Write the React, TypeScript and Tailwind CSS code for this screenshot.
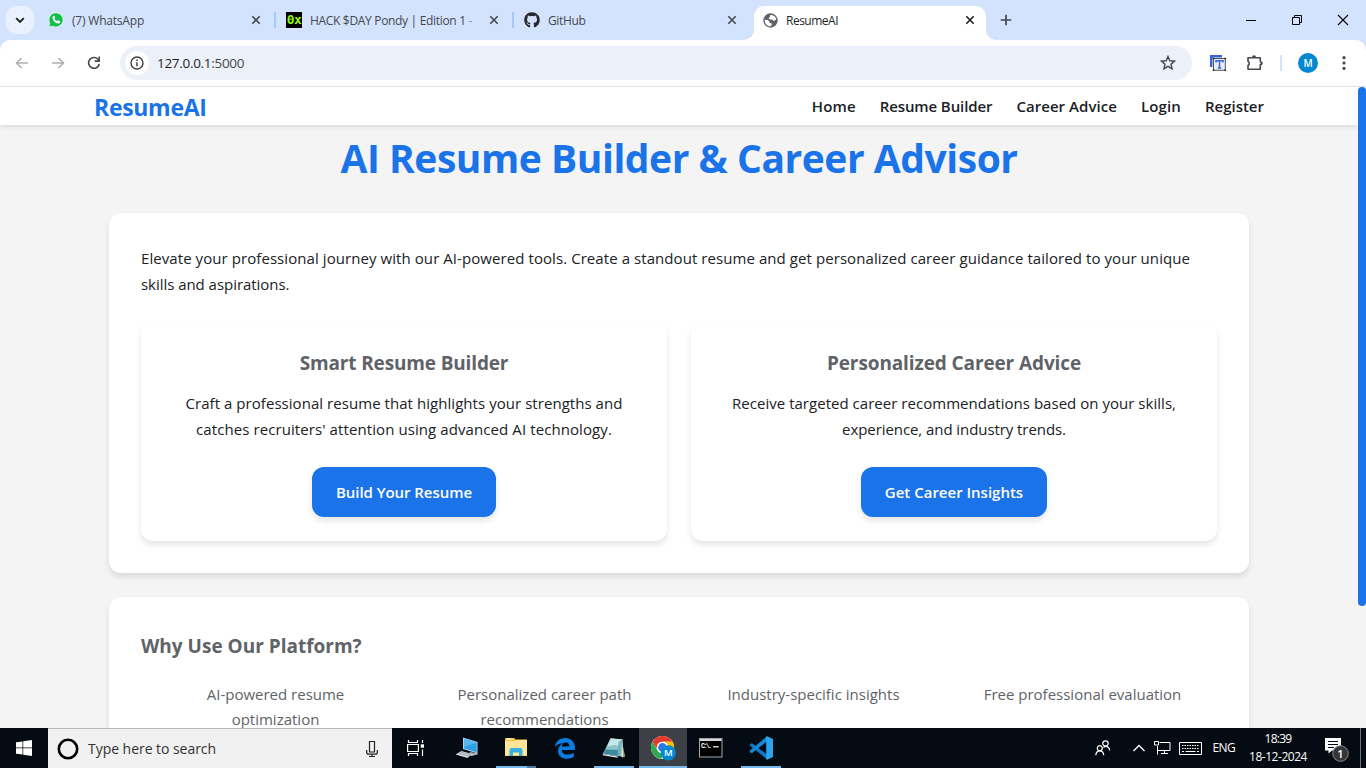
import type { ReactNode } from "react";
import { FaGithub } from "react-icons/fa";

function CloseIcon({ color = "#45484d" }: { color?: string }) {
  return (
    <svg width="10" height="10" viewBox="0 0 10 10" className="shrink-0">
      <path d="M1.3 1.3 8.7 8.7M8.7 1.3 1.3 8.7" stroke={color} strokeWidth="1.6" />
    </svg>
  );
}

function WhatsAppIcon() {
  return (
    <svg width="16" height="16" viewBox="0 0 16 16">
      <path d="M8 .8a7.1 7.1 0 0 0-6.2 10.6L.8 15.2l3.9-1A7.1 7.1 0 1 0 8 .8Z" fill="#0fc04b" stroke="#fff" strokeWidth=".7" />
      <path
        d="M5.4 4.1c.4-.4.9-.3 1.1.1l.6 1.3c.1.3 0 .6-.2.8l-.4.5c.6 1.1 1.4 1.9 2.6 2.5l.6-.7c.2-.2.4-.3.7-.2l1.4.7c.3.2.4.4.3.8-.2 1.1-1.1 1.7-2.1 1.6C7.3 11.2 5 9 4.5 6.3c-.1-.9.3-1.7.9-2.2Z"
        fill="#fff"
      />
    </svg>
  );
}

function GlobeIcon() {
  return (
    <svg width="15" height="15" viewBox="0 0 15 15" className="shrink-0">
      <circle cx="7.5" cy="7.5" r="7.2" fill="#5f6368" />
      <path d="M8.3 1.9 7 2.2v1.5L5.6 5.2 7 6.6h2.2l1 1.2 1.8-.3 1.3-1.4A6 6 0 0 0 8.3 1.9Z" fill="#fff" />
      <path d="M1.7 6.7 4.8 7l1.7 1.4v1.500l2 .3.4 1.2-1.700 2A6 6 0 0 1 1.7 6.700Z" fill="#fff" />
    </svg>
  );
}

function Tab({ icon, title }: { icon: ReactNode; title: ReactNode }) {
  return (
    <div className="flex h-full w-[213px] items-center">
      <span className="flex w-4 shrink-0 justify-center">{icon}</span>
      <span className="ml-2 flex-1 overflow-hidden pt-0.5 text-xs whitespace-nowrap text-[#45484d]">{title}</span>
      <CloseIcon />
    </div>
  );
}

function TabDivider() {
  return <span className="mr-[10px] ml-[13px] h-4 w-0.5 shrink-0 bg-[#a8c7fa]" />;
}

function TabStrip() {
  return (
    <div className="flex h-10 shrink-0 bg-[#d3e3fd] pl-1.5">
      <div className="mt-1.5 flex h-7 w-7 items-center justify-center rounded-[10px] bg-[#eaf1fe]">
        <svg width="10" height="7" viewBox="0 0 10 7">
          <path d="M1.2 1.2 5 5l3.8-3.8" fill="none" stroke="#1f1f1f" strokeWidth="1.9" />
        </svg>
      </div>
      <div className="flex h-full items-center pl-[14px]">
        <Tab icon={<WhatsAppIcon />} title={<span className="tracking-[-0.2px]">(7) WhatsApp</span>} />
        <TabDivider />
        <Tab
          icon={
            <span className="flex h-4 w-4 items-center justify-center overflow-hidden bg-black font-['DejaVu_Sans_Mono',monospace] text-[13px] leading-4 font-bold tracking-[-0.6px] text-[#8df615]">
              0x
            </span>
          }
          title={
            <span className="tracking-[-0.32px]">
              HACK $DAY Pondy | Edition 1 <span className="text-[#8d96a6]">-</span>
            </span>
          }
        />
        <TabDivider />
        <Tab icon={<FaGithub size={16} color="#24292f" />} title={<span className="tracking-[-0.35px]">GitHub</span>} />
      </div>
      <div className="ml-[7px] flex h-full items-end">
        <svg width="10" height="10" className="shrink-0">
          <path d="M10 0v10H0A10 10 0 0 0 10 0Z" fill="#fff" />
        </svg>
        <div className="flex h-[34px] w-[232px] items-center rounded-t-[10px] bg-white pr-[11px] pb-[6px] pl-[9px]">
          <GlobeIcon />
          <span className="ml-2 flex-1 pt-0.5 text-xs tracking-[-0.5px] text-[#1f1f1f]">ResumeAI</span>
          <CloseIcon color="#1f1f1f" />
        </div>
        <svg width="10" height="10" className="shrink-0">
          <path d="M0 0v10h10A10 10 0 0 1 0 0Z" fill="#fff" />
        </svg>
      </div>
      <svg width="12" height="12" viewBox="0 0 12 12" className="mt-[14px] ml-1">
        <path d="M6 .7v10.600M.7 6h10.600" stroke="#45484d" strokeWidth="1.7" />
      </svg>
      <div className="mt-[14px] ml-auto flex h-3 items-center gap-[34px] pr-[17px]">
        <svg width="12" height="12">
          <path d="M1 6.500h10" stroke="#000" />
        </svg>
        <svg width="12" height="12">
          <path d="M1.500 3.500h7v7h-7zM3.500 3.500v-2h7v7h-2" fill="none" stroke="#000" />
        </svg>
        <svg width="12" height="12">
          <path d="m1 1 10 10M11 1 1 11" stroke="#000" strokeWidth="1.1" />
        </svg>
      </div>
    </div>
  );
}

function ArrowIcon({ flip = false }: { flip?: boolean }) {
  return (
    <svg width="14" height="12" viewBox="0 0 14 12" className={flip ? "rotate-180" : ""}>
      <path d="M13 6H1.8M6.500 1 1.500 6l5 5" fill="none" stroke="#acaeb1" strokeWidth="1.5" />
    </svg>
  );
}

function Toolbar() {
  return (
    <div className="h-[47px] shrink-0 bg-[#d3e3fd]">
      <div className="flex h-full items-center rounded-t-[10px] border-b border-[#dfe1e5] bg-white px-[15px]">
        <ArrowIcon />
        <div className="w-[22px]" />
        <ArrowIcon flip />
        <svg width="14" height="14" viewBox="0 0 14 14" className="ml-[22px]">
          <path d="M12.3 8A5.400 5.400 0 1 1 11 3.200l1 1.200" fill="none" stroke="#45484d" strokeWidth="1.6" />
          <path d="M12.2.6v4.500H7.700" fill="none" stroke="#45484d" strokeWidth="1.6" />
        </svg>
        <div className="ml-[19px] flex h-[34px] w-[1072px] items-center rounded-full bg-[#ecf0f9] pr-4 pl-[5px]">
          <span className="flex h-6 w-6 items-center justify-center rounded-full bg-white">
            <svg width="14" height="14" viewBox="0 0 14 14">
              <circle cx="7" cy="7" r="6" fill="none" stroke="#3c4043" strokeWidth="1.4" />
              <path d="M7 6.200v4.100M7 3.500V5" stroke="#3c4043" strokeWidth="1.5" />
            </svg>
          </span>
          <span className="ml-2 flex-1 text-[13.5px] tracking-[-0.3px] text-[#1f1f1f]">
            127.0.0.1<span className="text-[#474747]">:5000</span>
          </span>
          <svg width="16" height="16" viewBox="0 0 16 16">
            <path
              d="m8 1.5 1.85 4.25 4.65.4-3.5 3.05 1.05 4.55L8 11.35l-4.05 2.4L5 9.2 1.5 6.15l4.65-.4z"
              fill="none"
              stroke="#45484d"
              strokeWidth="1.4"
            />
          </svg>
        </div>
        <svg width="16" height="16" viewBox="0 0 16 16" className="ml-[18px]">
          <path d="M0 0h12v2.500H2.500V12H0z" fill="#3367d6" />
          <rect x="3.5" y="3.5" width="11.8" height="11.8" fill="#e9edf5" stroke="#555" />
          <path d="M6 7.500V5.800h7v1.700M9.500 5.500v7.500M7.800 13h3.400" fill="none" stroke="#3367d6" strokeWidth="1.5" />
          <path d="M2.700 2.700h1.600v1.600H2.700zM14.400 2.700H16v1.600h-1.600zM2.700 14.400h1.600V16H2.700zM14.400 14.400H16V16h-1.600z" fill="#222" />
        </svg>
        <svg width="18" height="18" viewBox="0 0 18 18" className="mb-px ml-[20px]">
          <path
            d="M2 3.700h12.300v4.100q1.700.3 1.700 1.400t-1.700 1.400v4.700H2v-3.800a2.400 2.400 0 0 0 0-4.200z"
            fill="none"
            stroke="#45484d"
            strokeWidth="1.6"
            strokeLinejoin="round"
          />
          <path d="M6 3.300a2 2 0 0 1 4 0zM14.800 7.300a2 2 0 0 1 0 3.900z" fill="#45484d" />
        </svg>
        <span className="ml-[16px] h-4 w-0.5 bg-[#d3e3fd]" />
        <span className="ml-4 flex h-5 w-5 items-center justify-center rounded-full bg-[#0288d1] text-[10px] font-semibold text-white">M</span>
        <svg width="4" height="14" viewBox="0 0 4 14" className="mr-[5px] ml-auto" fill="#45484d">
          <circle cx="2" cy="1.7" r="1.6" />
          <circle cx="2" cy="7" r="1.6" />
          <circle cx="2" cy="12.3" r="1.6" />
        </svg>
      </div>
    </div>
  );
}

function Feature({ title, lines, action }: { title: ReactNode; lines: ReactNode[]; action: ReactNode }) {
  return (
    <div className="flex h-[218px] flex-1 flex-col items-center rounded-xl bg-white pt-6 shadow-[0_4px_6px_rgba(0,0,0,0.1)]">
      <h3 className="text-[19px] leading-8 font-bold text-[#5f6368]">{title}</h3>
      <div className="mt-3 text-center">
        {lines.map((line, i) => (
          <p key={i}>{line}</p>
        ))}
      </div>
      <button className="mt-[25px] h-[50px] rounded-xl bg-[#1a73e8] px-6 text-[15px] font-semibold text-white shadow-[0_4px_6px_rgba(0,0,0,0.1)]">{action}</button>
    </div>
  );
}

const benefits = [
  ["AI-powered resume", "optimization"],
  ["Personalized career path", "recommendations"],
  ["Industry-specific insights"],
  ["Free professional evaluation"],
];

function Page() {
  return (
    <div className="flex min-h-0 flex-1 overflow-hidden bg-[#f4f4f4] text-[15px] leading-[25.6px] text-[#202124]">
      <div className="w-[1358px] shrink-0">
        <header className="flex h-[38px] items-center justify-between bg-white px-[94px] shadow-[0_2px_4px_rgba(0,0,0,0.1)]">
          <div className="pt-[3px] text-[23px] font-bold tracking-[-0.3px] text-[#1a73e8]">ResumeAI</div>
          <nav className="flex gap-6 pt-0.5 font-semibold">
            <a className="tracking-[0.1px]">Home</a>
            <a className="tracking-[-0.1px]">Resume Builder</a>
            <a className="tracking-[0.05px]">Career Advice</a>
            <a className="tracking-[0.13px]">Login</a>
            <a>Register</a>
          </nav>
        </header>
        <h1 className="mt-[3px] text-center text-[39px] leading-[60px] font-bold tracking-[-0.46px] text-[#1a73e8]">AI Resume Builder &amp; Career Advisor</h1>
        <main className="mx-auto mt-[25px] flex w-[1140px] flex-col gap-6">
          <section className="h-[360px] rounded-xl bg-white px-8 pt-[33px] shadow-[0_4px_6px_rgba(0,0,0,0.1)]">
            <div className="whitespace-nowrap">
              <p className="tracking-[0.072px]">
                Elevate your professional journey with our AI-powered tools. Create a standout resume and get personalized career guidance tailored to your unique
              </p>
              <p className="tracking-[-0.04px]">skills and aspirations.</p>
            </div>
            <div className="mt-[26px] flex gap-6">
              <Feature
                title={<span className="tracking-[-0.15px]">Smart Resume Builder</span>}
                lines={[
                  <span className="tracking-[0.05px]">Craft a professional resume that highlights your strengths and</span>,
                  <span className="tracking-[0.09px]">catches recruiters' attention using advanced AI technology.</span>,
                ]}
                action={<span className="tracking-[-0.05px]">Build Your Resume</span>}
              />
              <Feature
                title={<span className="tracking-[-0.11px]">Personalized Career Advice</span>}
                lines={[
                  <span className="tracking-[0.03px]">Receive targeted career recommendations based on your skills,</span>,
                  <span className="tracking-[-0.07px]">experience, and industry trends.</span>,
                ]}
                action="Get Career Insights"
              />
            </div>
          </section>
          <section className="h-[240px] rounded-xl bg-white p-8 shadow-[0_4px_6px_rgba(0,0,0,0.1)]">
            <h2 className="text-[19px] leading-[34px] font-bold text-[#5f6368]">Why Use Our Platform?</h2>
            <ul className="mt-[19px] grid grid-cols-4 text-center leading-[25px] text-[#5f6368]">
              {benefits.map((lines) => (
                <li key={lines[0]}>
                  {lines.map((line) => (
                    <p key={line}>{line}</p>
                  ))}
                </li>
              ))}
            </ul>
          </section>
        </main>
      </div>
      <div className="h-[519px] w-2 shrink-0 rounded bg-[#1a73e8]" />
    </div>
  );
}

function TaskItem({ children, active = false, open = false }: { children: ReactNode; active?: boolean; open?: boolean }) {
  return (
    <div className={`flex h-10 w-12 flex-col items-center ${active ? "bg-[#3d4046]" : ""}`}>
      <div className="flex h-[38px] items-center pt-0.5">{children}</div>
      <div className={`h-0.5 ${active ? "w-12" : "w-10"} ${open || active ? "bg-[#76b9ed]" : ""}`} />
    </div>
  );
}

function Taskbar() {
  return (
    <div className="flex h-10 shrink-0 bg-[#050b12] text-white">
      <div className="flex w-12 items-center justify-center">
        <svg width="16" height="16" viewBox="0 0 16 16" fill="#fff">
          <path d="M0 2.300 6.500 1.400v6.200H0zM7.200 1.300 16 0v7.600H7.200zM0 8.300h6.500v6.300L0 13.700zM7.200 8.300H16V16l-8.800-1.300z" />
        </svg>
      </div>
      <div className="flex w-[344px] items-center border-t border-[#b5b5b5] bg-[#f1f1f1] pr-[14px] pl-[9px]">
        <svg width="22" height="22" viewBox="0 0 22 22">
          <circle cx="11" cy="11" r="9.2" fill="none" stroke="#000" strokeWidth="2.6" />
        </svg>
        <span className="ml-[9px] flex-1 text-[14px] tracking-[-0.04px] text-[#333]">Type here to search</span>
        <svg width="12" height="18" viewBox="0 0 12 18" fill="none" stroke="#222" strokeWidth="1.2">
          <path d="M3.500 1.500h5V12h-5zM.700 10v2.200q0 2 2 2h6.600q2 0 2-2V10M6 14.200v2.300M3 16.500h6" />
        </svg>
      </div>
      <TaskItem>
        <svg width="18" height="16" viewBox="0 0 18 16" fill="none" stroke="#fff" strokeWidth="1.2">
          <path d="M.600 4.500h10.800v7H.600zM1.500 0v2.500h9V0M1.500 16v-2.500h9V16M15.500 0v3M15.500 9.500V16" />
          <path d="M13.700 4.300h3.300v3.400h-3.300z" fill="#fff" stroke="none" />
        </svg>
      </TaskItem>
      <div className="w-[3px]" />
      <TaskItem>
        <svg width="24" height="22" viewBox="0 0 24 22">
          <path d="m8 .500 14.500 4.500v11.500L8 12z" fill="#a4d8f5" />
          <path d="m9 1.800 12.700 3.900v9.500L9 11.200z" fill="#2e9fe8" />
          <path d="m9 1.800 12.700 3.900L9 10z" fill="#57b7f1" />
          <path d="m15 14.500 3.500 1v2.500l-5 .8z" fill="#879097" />
          <path d="m16 16.500 6-.8 1 1.500-7 2z" fill="#b3b9bc" />
          <path d="m6.500 14 10.500 3-4.500 4L.500 17.500z" fill="#d4d8da" />
          <path d="m3.500 16.200 10.500 3M5.500 15l10 2.900" stroke="#8d9599" strokeWidth=".7" />
        </svg>
      </TaskItem>
      <div className="ml-px flex w-[48px] flex-col items-center">
        <div className="flex h-[38px] items-center">
          <svg width="22" height="20" viewBox="0 0 22 20">
            <path d="M0 2q0-1 1-1h8l1.500 1.500H22V19H0z" fill="#f5c744" />
            <path d="M0 4h10l1.500-1H22v15.500H0z" fill="#ffe596" />
            <path d="M1.500 1.500h5v1.300h-5z" fill="#fff4c7" />
            <path d="M4.500 19v-6q0-2 2-2h9q2 0 2 2v6H14v-3.500H8V19z" fill="#39b0e5" />
          </svg>
        </div>
        <div className="flex h-0.5 w-10">
          <div className="w-[31px] bg-[#76b9ed]" />
          <div className="flex-1 bg-[#4b7ba3]" />
        </div>
      </div>
      <div className="w-px" />
      <TaskItem>
        <svg width="22" height="22" viewBox="0 0 22 22">
          <path
            d="M1 10C1.500 4.500 5.500 1 11 1c6.400 0 10 4.600 10 9.800v2.100H7.700c.2 3.200 2.800 4.700 6.100 4.700 2.200 0 4.300-.6 6-1.500v4c-2 1.200-4.300 1.700-6.900 1.700C7.300 21.800 4 18.500 4 14c0-3.800 2.200-6.500 5.300-7.800C5.800 6.300 3 7.400 1 10Zm6.700-.5h7.800c-.1-2.500-1.300-4.100-3.800-4.100-2.200 0-3.700 1.700-4 4.100Z"
            fill="#0a7be0"
          />
        </svg>
      </TaskItem>
      <div className="w-px" />
      <TaskItem open>
        <svg width="24" height="23" viewBox="0 0 24 23">
          <path d="m19.500 3 3.700 16.500-3 1.300z" fill="#b99a55" />
          <path d="M9 1.500 20.500 2.300 21 20l-3.500-1z" fill="#dfeff0" />
          <path d="M8.500 1.500 20 2.500l-4.500 17L.800 17z" fill="#8cc4cd" />
          <path d="M8.500 1.500 20 2.500l-1.800 6.700-6-1.200-7 1.500z" fill="#c3e6e9" />
          <path d="M3.500 12.500 17.300 13l-1.700 6L1.500 16.500z" fill="#3d899b" />
          <path d="m16.500 5 3.500-2.500-.500 16-4 1z" fill="#70b4c0" />
          <path d="M.800 17l14.700 2.500v1.300L.800 18.300z" fill="#e7ecec" />
        </svg>
      </TaskItem>
      <div className="w-px" />
      <TaskItem active>
        <svg width="26" height="26" viewBox="0 0 26 26">
          <circle cx="12.5" cy="12.5" r="11.5" fill="#fff" />
          <path d="M12.500 1a11.500 11.500 0 0 1 10 5.750H12.500a5.750 5.750 0 0 0-5 8.600l-5-8.600A11.500 11.500 0 0 1 12.500 1Z" fill="#e33b2e" />
          <path d="M2.500 6.750 7.500 15.400a5.750 5.750 0 0 0 5 2.900l-1 5.700A11.500 11.500 0 0 1 2.500 6.750Z" fill="#2da94f" />
          <path d="M22.500 6.750A11.500 11.500 0 0 1 12.500 24l5-8.600a5.750 5.750 0 0 0-5-8.650z" fill="#fdbd00" />
          <circle cx="12.5" cy="12.5" r="5.5" fill="#fff" />
          <circle cx="12.5" cy="12.5" r="4.4" fill="#3476e8" />
          <circle cx="18.3" cy="17.8" r="7.6" fill="#0288d1" />
          <text x="18.3" y="21.3" textAnchor="middle" fontSize="9.5" fontWeight="600" fill="#fff">
            M
          </text>
        </svg>
      </TaskItem>
      <TaskItem>
        <svg width="24" height="20" viewBox="0 0 24 20">
          <rect x=".5" y=".5" width="22.5" height="18.5" fill="#000" stroke="#a6a6a6" />
          <path d="M1 1h21.500v2H1z" fill="#d9d9d9" />
          <text x="2" y="9.5" fontSize="6.5" fontWeight="700" fill="#fff" fontFamily="Liberation Mono, monospace" textLength="11">
            C:\.
          </text>
          <path d="M14 8.800h5.500" stroke="#fff" strokeWidth="1.2" />
        </svg>
      </TaskItem>
      <div className="w-[2px]" />
      <TaskItem open>
        <svg width="24" height="24" viewBox="0 0 24 24">
          <path d="m1.300 8.300 1.600-1.100L18.500 19v4.500L.700 9.500z" fill="#0c7cc6" />
          <path d="M.600 14.800 18 .200V5.500L2.900 17.200 1.300 16.400z" fill="#1488d4" />
          <path d="m18 .200 6 2.800v18l-6 2.800-.800-.500V.500z" fill="#2aa4f0" />
        </svg>
      </TaskItem>
      <div className="ml-auto flex items-center">
        <svg width="16" height="16" viewBox="0 0 16 16" fill="none" stroke="#fff" strokeWidth="1.2">
          <circle cx="10.5" cy="3.5" r="2.7" />
          <circle cx="4.8" cy="8.2" r="2.5" />
          <path d="M.800 15.300c.2-2.700 1.600-4.500 4-4.500s3.700 1.800 3.900 4.500M8.500 7.600c.6-.8 1.200-1.200 2.100-1.200 2.200 0 3.700 1.700 4.200 4.100" />
        </svg>
        <svg width="12" height="8" viewBox="0 0 12 8" className="ml-[22px]">
          <path d="m.500 7 5.500-5.500L11.500 7" fill="none" stroke="#fff" strokeWidth="1.3" />
        </svg>
        <svg width="17" height="14" viewBox="0 0 17 14" className="ml-[9px]" fill="none" stroke="#fff">
          <path d="M5.500 1.500h10.500v8H4M3.500 5v8.500M10.500 9.500v3M7 12.500h7M.500.500h4v3.500h-4z" />
        </svg>
        <svg width="23" height="13" viewBox="0 0 23 13" className="ml-[8px]" fill="none" stroke="#fff">
          <path d="M.500.500h22v12H.500z" />
          <path d="M3 3.500h17M3 6.500h17" strokeDasharray="1.500 1" strokeWidth="1.2" />
          <path d="M3 9.500h2M6.500 9.500h10M18 9.500h2" />
        </svg>
        <span className="ml-[11px] text-xs tracking-[-0.65px]">ENG</span>
        <div className="ml-[14px] w-[58px] text-center text-xs leading-[18px] whitespace-nowrap">
          <div className="tracking-[-0.72px]">18:39</div>
          <div className="tracking-[-0.46px]">18-12-2024</div>
        </div>
        <svg width="26" height="26" viewBox="0 0 26 26" className="mt-[3px] ml-[17px]">
          <path d="M1 1h16v12.500H8l-3.500 3v-3H1z" fill="#fff" />
          <path d="M4 4.500h10M4 7.500h10M4 10.500h6" stroke="#050b12" strokeWidth="1.1" />
          <circle cx="16.5" cy="16.5" r="7.8" fill="#343638" stroke="#8a8a8a" />
          <text x="16.5" y="20.5" textAnchor="middle" fontSize="11" fontWeight="600" fill="#fff">
            1
          </text>
        </svg>
        <span className="ml-[10px] h-10 w-px bg-[#6d7074]" />
        <span className="w-[5px]" />
      </div>
    </div>
  );
}

export default function App() {
  return (
    <div className="flex h-[768px] w-[1366px] flex-col overflow-hidden bg-white font-['Open_Sans','Noto_Sans',sans-serif]">
      <TabStrip />
      <Toolbar />
      <Page />
      <Taskbar />
    </div>
  );
}
